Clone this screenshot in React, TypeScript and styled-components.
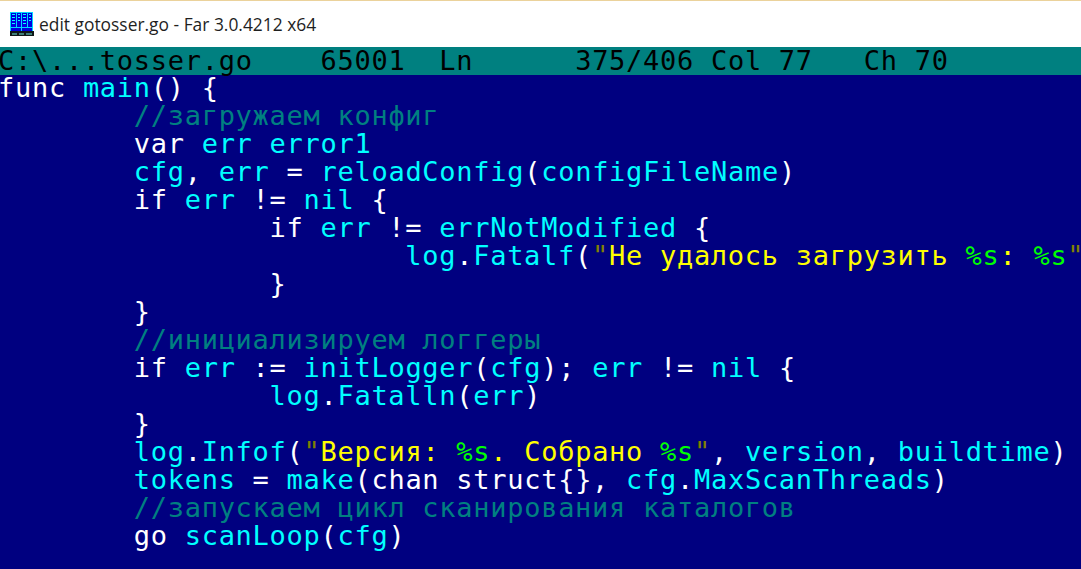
import React from "react";
import styled, { createGlobalStyle } from "styled-components";

type Kind = "plain" | "id" | "comment" | "str" | "quote" | "fmt";
type Row = { indent: number; tokens: [Kind, string][] };

const CELL = 16.97;

const GlobalStyle = createGlobalStyle`
  html, body {
    margin: 0;
    padding: 0;
    background: #000080;
    overflow: hidden;
  }
`;

const Page = styled.div`
  width: 1081px;
  height: 569px;
  display: flex;
  flex-direction: column;
  overflow: hidden;
`;

const TitleBar = styled.div`
  height: 46px;
  flex: none;
  display: flex;
  align-items: center;
  gap: 5px;
  padding-left: 10px;
  background: #fff;
  border-top: 1px solid #ebd29b;
  font-family: "Open Sans", sans-serif;
  font-size: 17.4px;
  color: #1f1f1f;
`;

const Console = styled.div`
  flex: 1;
  background: #000080;
  font-family: "DejaVu Sans Mono", monospace;
  font-size: 27px;
  letter-spacing: 0.72px;
  white-space: pre;
  overflow: hidden;
`;

const StatusLine = styled.div`
  height: 28px;
  line-height: 28px;
  margin-left: -2px;
  margin-bottom: -1px;
  padding-right: 2px;
  background: #008080;
  color: #000;
`;

const CodeLine = styled.div<{ $indent: number }>`
  height: 28px;
  line-height: 28px;
  margin-left: ${(p) => p.$indent * 8 * CELL - 2}px;
  color: #fff;
`;

const colors: Record<Kind, string> = {
  plain: "#ffffff",
  id: "#00ffff",
  comment: "#008080",
  str: "#ffff00",
  quote: "#808000",
  fmt: "#00ff00",
};

const Token = styled.span<{ $kind: Kind }>`
  color: ${(p) => colors[p.$kind]};
`;

const IconBox = styled.svg`
  width: 24px;
  height: 24px;
  flex: none;
`;

const FarIcon = () => (
  <IconBox viewBox="0 0 24 24" shapeRendering="crispEdges">
    <rect x="0" y="0" width="23" height="19" fill="#0000e0" />
    <path
      d="M0 .5H23M.5 0V19M11.5 0V19M22.5 0V19M0 15.5H23M6.5 1V15M17.5 1V15"
      stroke="#00d8ff"
      fill="none"
    />
    <path
      d="M2 2.5H5M2 5.5H5M2 8.5H5M2 11.5H5M8 2.5H10M8 5.5H10M8 8.5H10M13 2.5H16M13 5.5H16M13 8.5H16M13 11.5H16M19 2.5H21M19 5.5H21M19 8.5H21"
      stroke="#00ffff"
      fill="none"
    />
    <rect x="0" y="19" width="24" height="5" fill="#101818" />
    <rect x="2" y="21" width="5" height="2" fill="#3f7f78" />
    <rect x="9" y="21" width="5" height="2" fill="#3f7f78" />
    <rect x="16" y="21" width="6" height="2" fill="#3f7f78" />
  </IconBox>
);

// indent is in tab stops (8 cells), tokens are [kind, text] pairs
const rows: Row[] = [
  { indent: 0, tokens: [["plain", "func "], ["id", "main"], ["plain", "() {"]] },
  { indent: 1, tokens: [["comment", "//загружаем конфиг"]] },
  { indent: 1, tokens: [["plain", "var "], ["id", "err error1"]] },
  { indent: 1, tokens: [["id", "cfg"], ["plain", ", "], ["id", "err"], ["plain", " = "], ["id", "reloadConfig"], ["plain", "("], ["id", "configFileName"], ["plain", ")"]] },
  { indent: 1, tokens: [["plain", "if "], ["id", "err"], ["plain", " != "], ["id", "nil"], ["plain", " {"]] },
  { indent: 2, tokens: [["plain", "if "], ["id", "err"], ["plain", " != "], ["id", "errNotModified"], ["plain", " {"]] },
  { indent: 3, tokens: [["id", "log"], ["plain", "."], ["id", "Fatalf"], ["plain", "("], ["quote", '"'], ["str", "Не удалось загрузить "], ["fmt", "%s"], ["str", ": "], ["fmt", "%s"], ["quote", '"']] },
  { indent: 2, tokens: [["plain", "}"]] },
  { indent: 1, tokens: [["plain", "}"]] },
  { indent: 1, tokens: [["comment", "//инициализируем логгеры"]] },
  { indent: 1, tokens: [["plain", "if "], ["id", "err"], ["plain", " := "], ["id", "initLogger"], ["plain", "("], ["id", "cfg"], ["plain", "); "], ["id", "err"], ["plain", " != "], ["id", "nil"], ["plain", " {"]] },
  { indent: 2, tokens: [["id", "log"], ["plain", "."], ["id", "Fatalln"], ["plain", "("], ["id", "err"], ["plain", ")"]] },
  { indent: 1, tokens: [["plain", "}"]] },
  { indent: 1, tokens: [["id", "log"], ["plain", "."], ["id", "Infof"], ["plain", "("], ["quote", '"'], ["str", "Версия: "], ["fmt", "%s"], ["str", ". Собрано "], ["fmt", "%s"], ["quote", '"'], ["plain", ", "], ["id", "version"], ["plain", ", "], ["id", "buildtime"], ["plain", ")"]] },
  { indent: 1, tokens: [["id", "tokens"], ["plain", " = "], ["id", "make"], ["plain", "(chan struct{}, "], ["id", "cfg"], ["plain", "."], ["id", "MaxScanThreads"], ["plain", ")"]] },
  { indent: 1, tokens: [["comment", "//запускаем цикл сканирования каталогов"]] },
  { indent: 1, tokens: [["plain", "go "], ["id", "scanLoop"], ["plain", "("], ["id", "cfg"], ["plain", ")"]] },
];

export default function App() {
  return (
    <Page>
      <GlobalStyle />
      <TitleBar>
        <FarIcon />
        <span>edit gotosser.go - Far 3.0.4212 x64</span>
      </TitleBar>
      <Console>
        <StatusLine>{"C:\\...tosser.go    65001  Ln      375/406 Col 77   Ch 70"}</StatusLine>
        {rows.map((row, i) => (
          <CodeLine key={i} $indent={row.indent}>
            {row.tokens.map(([kind, text], j) => (
              <Token key={j} $kind={kind}>
                {text}
              </Token>
            ))}
          </CodeLine>
        ))}
      </Console>
    </Page>
  );
}
